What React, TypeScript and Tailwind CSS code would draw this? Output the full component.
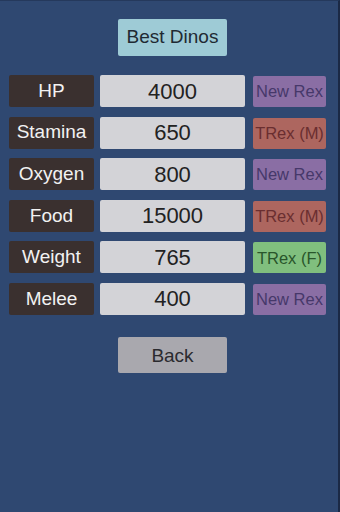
import React from "react";

type Row = { label: string; value: string; tag: string; kind: "new" | "m" | "f" };

const rows: Row[] = [
  { label: "HP", value: "4000", tag: "New Rex", kind: "new" },
  { label: "Stamina", value: "650", tag: "TRex (M)", kind: "m" },
  { label: "Oxygen", value: "800", tag: "New Rex", kind: "new" },
  { label: "Food", value: "15000", tag: "TRex (M)", kind: "m" },
  { label: "Weight", value: "765", tag: "TRex (F)", kind: "f" },
  { label: "Melee", value: "400", tag: "New Rex", kind: "new" },
];

function Tag({ kind, text }: { kind: Row["kind"]; text: string }) {
  if (kind === "new")
    return (
      <div className="w-[73px] h-[31px] mt-[1px] ml-[8px] flex items-center justify-center bg-[#8a6ea4] text-[#46386a] text-[16.5px] rounded-[2px] whitespace-nowrap overflow-hidden">
        {text}
      </div>
    );
  if (kind === "m")
    return (
      <div className="w-[73px] h-[31px] mt-[1px] ml-[8px] flex items-center justify-center bg-[#ad665f] text-[#6a2e30] text-[16.5px] rounded-[2px] whitespace-nowrap overflow-hidden">
        {text}
      </div>
    );
  return (
    <div className="w-[73px] h-[31px] mt-[1px] ml-[8px] flex items-center justify-center bg-[#80bf7e] text-[#29552b] text-[16.5px] rounded-[2px] whitespace-nowrap overflow-hidden">
      {text}
    </div>
  );
}

export default function App() {
  return (
    <div
      className="relative w-[340px] h-[512px] bg-[#2f4871] overflow-hidden border-t-[1px] border-t-[#25395c] border-r-[2px] border-r-[#1b2945]"
      style={{ fontFamily: '"Liberation Sans", Arial, sans-serif' }}
    >
      <div className="flex flex-col">
        <div className="ml-[118px] mt-[18px] w-[109px] h-[37px] flex items-center justify-center bg-[#9ecbd6] text-[#1f2a33] text-[19px] rounded-[2px]">
          Best Dinos
        </div>
        <div className="mt-[19px] flex flex-col gap-[9.6px]">
          {rows.map((r) => (
            <div key={r.label} className="flex h-[32px]">
              <div className="ml-[9px] w-[85px] h-[32px] flex items-center justify-center bg-[#3a302f] text-[#f2f2f2] text-[19px] rounded-[2px]">
                {r.label}
              </div>
              <div className="ml-[6px] w-[145px] h-[32px] flex items-center justify-center bg-[#d3d3d7] text-[#222222] text-[22px] rounded-[2px]">
                {r.value}
              </div>
              <Tag kind={r.kind} text={r.tag} />
            </div>
          ))}
        </div>
        <div className="ml-[118px] mt-[22px] w-[109px] h-[36px] flex items-center justify-center bg-[#a9a8ae] text-[#2a2a2e] text-[19px] rounded-[2px] pt-[2px]">
          Back
        </div>
      </div>
    </div>
  );
}
